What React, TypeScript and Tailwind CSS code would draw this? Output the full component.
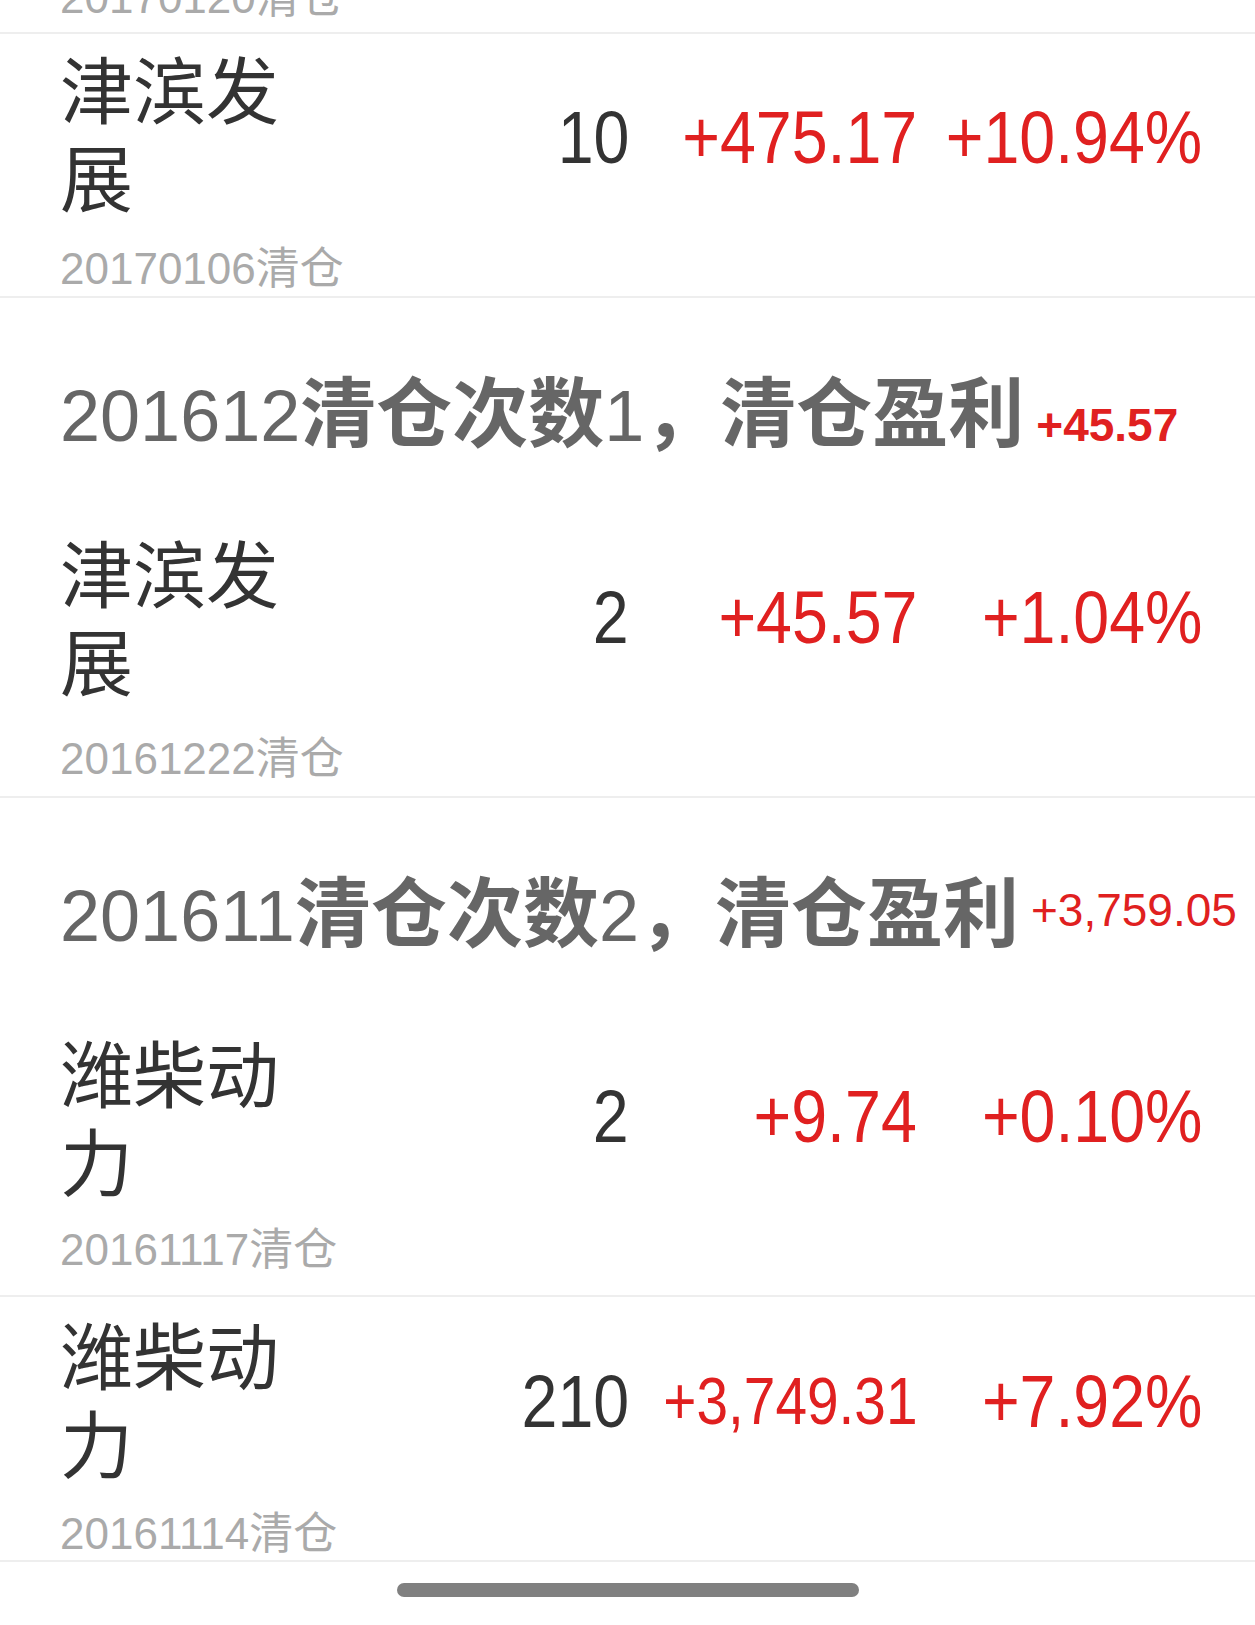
import React from 'react';

type Trade = {
  name: string;
  count: string;
  profit: string;
  rate: string;
  date: string;
  small?: boolean;
  pad: string;
  numPad: string;
  dateGap: string;
  bottom: string;
};

const FONT_NUM = "font-['Liberation_Sans','Noto_Sans_CJK_SC',sans-serif]";
const FONT_CJK = "font-['Noto_Sans_CJK_SC','Liberation_Sans',sans-serif]";

function DateLine({ text, className = '' }: { text: string; className?: string }) {
  return (
    <div className={`${FONT_NUM} h-[50px] text-[44px] leading-[52px] text-[#aaaaaa] whitespace-nowrap ${className}`}>
      {text}
    </div>
  );
}

function TradeRow({ t }: { t: Trade }) {
  return (
    <div className={`border-b-2 border-[#eeeeee] pl-[60px] pr-[53px] ${t.pad} ${t.bottom}`}>
      <div className="flex items-center">
        <div className={`${FONT_CJK} w-[240px] h-[176px] text-[73px] leading-[88px] text-[#333333]`}>
          {t.name}
        </div>
        <div className={`flex flex-1 items-center ${t.numPad} ${FONT_NUM} leading-[80px] whitespace-nowrap`}>
          <div className="flex flex-1 justify-end text-[75px] text-[#333333]">
            <span className="inline-block origin-right scale-x-[0.86]">{t.count}</span>
          </div>
          <div className={`flex w-[288px] justify-end text-[#e02020] ${t.small ? 'text-[66px]' : 'text-[75px]'}`}>
            <span className="inline-block origin-right scale-x-[0.86]">{t.profit}</span>
          </div>
          <div className="flex w-[285px] justify-end text-[75px] text-[#e02020]">
            <span className="inline-block origin-right scale-x-[0.86]">{t.rate}</span>
          </div>
        </div>
      </div>
      <DateLine text={t.date} className={t.dateGap} />
    </div>
  );
}

function MonthHeader({
  month,
  times,
  profit,
  align,
}: {
  month: string;
  times: string;
  profit: string;
  align: 'baseline' | 'top';
}) {
  return (
    <div
      className={`h-[218px] pl-[60px] pt-[72px] flex whitespace-nowrap ${
        align === 'baseline' ? 'items-baseline' : 'items-start'
      }`}
    >
      <div className={`${FONT_NUM} text-[76px] leading-[90px] font-bold text-[#666666]`}>
        <span className="text-[72px] font-normal">{month}</span>
        清仓次数
        <span className="text-[72px] font-normal">{times}</span>
        ，清仓盈利
      </div>
      <div
        className={`${FONT_NUM} ml-[12px] text-[46px] leading-[46px] text-[#e02020] ${
          align === 'top' ? 'mt-[17px] font-normal' : 'font-bold'
        }`}
      >
        {profit}
      </div>
    </div>
  );
}

const dec: Trade = {
  name: '津滨发展',
  count: '10',
  profit: '+475.17',
  rate: '+10.94%',
  date: '20170106清仓',
  pad: 'pt-[8px]',
  numPad: 'pt-[14px]',
  dateGap: 'mt-[25px]',
  bottom: 'pb-[3px]',
};

const dec2: Trade = {
  name: '津滨发展',
  count: '2',
  profit: '+45.57',
  rate: '+1.04%',
  date: '20161222清仓',
  pad: 'pt-[10px]',
  numPad: 'pt-[6px]',
  dateGap: 'mt-[31px]',
  bottom: 'pb-[13px]',
};

const nov: Trade[] = [
  {
    name: '潍柴动力',
    count: '2',
    profit: '+9.74',
    rate: '+0.10%',
    date: '20161117清仓',
    pad: 'pt-[10px]',
    numPad: 'pt-[4px]',
    dateGap: 'mt-[22px]',
    bottom: 'pb-[21px]',
  },
  {
    name: '潍柴动力',
    count: '210',
    profit: '+3,749.31',
    rate: '+7.92%',
    date: '20161114清仓',
    small: true,
    pad: 'pt-[11px]',
    numPad: 'pt-[10px]',
    dateGap: 'mt-[24px]',
    bottom: 'pb-[2px]',
  },
];

export default function App() {
  return (
    <div className="w-full h-[1625px] bg-white overflow-hidden">
      {/* previous row, scrolled mostly off screen */}
      <div className="h-[34px] overflow-hidden border-b-2 border-[#eeeeee] pl-[60px]">
        <DateLine text="20170120清仓" className="-mt-[28px]" />
      </div>

      <TradeRow t={dec} />

      <MonthHeader month="201612" times="1" profit="+45.57" align="baseline" />
      <TradeRow t={dec2} />

      <MonthHeader month="201611" times="2" profit="+3,759.05" align="top" />
      {nov.map((t) => (
        <TradeRow key={t.date} t={t} />
      ))}

      {/* home indicator */}
      <div className="flex justify-center pt-[21px]">
        <div className="w-[462px] h-[14px] rounded-full bg-[#808080]" />
      </div>
    </div>
  );
}
